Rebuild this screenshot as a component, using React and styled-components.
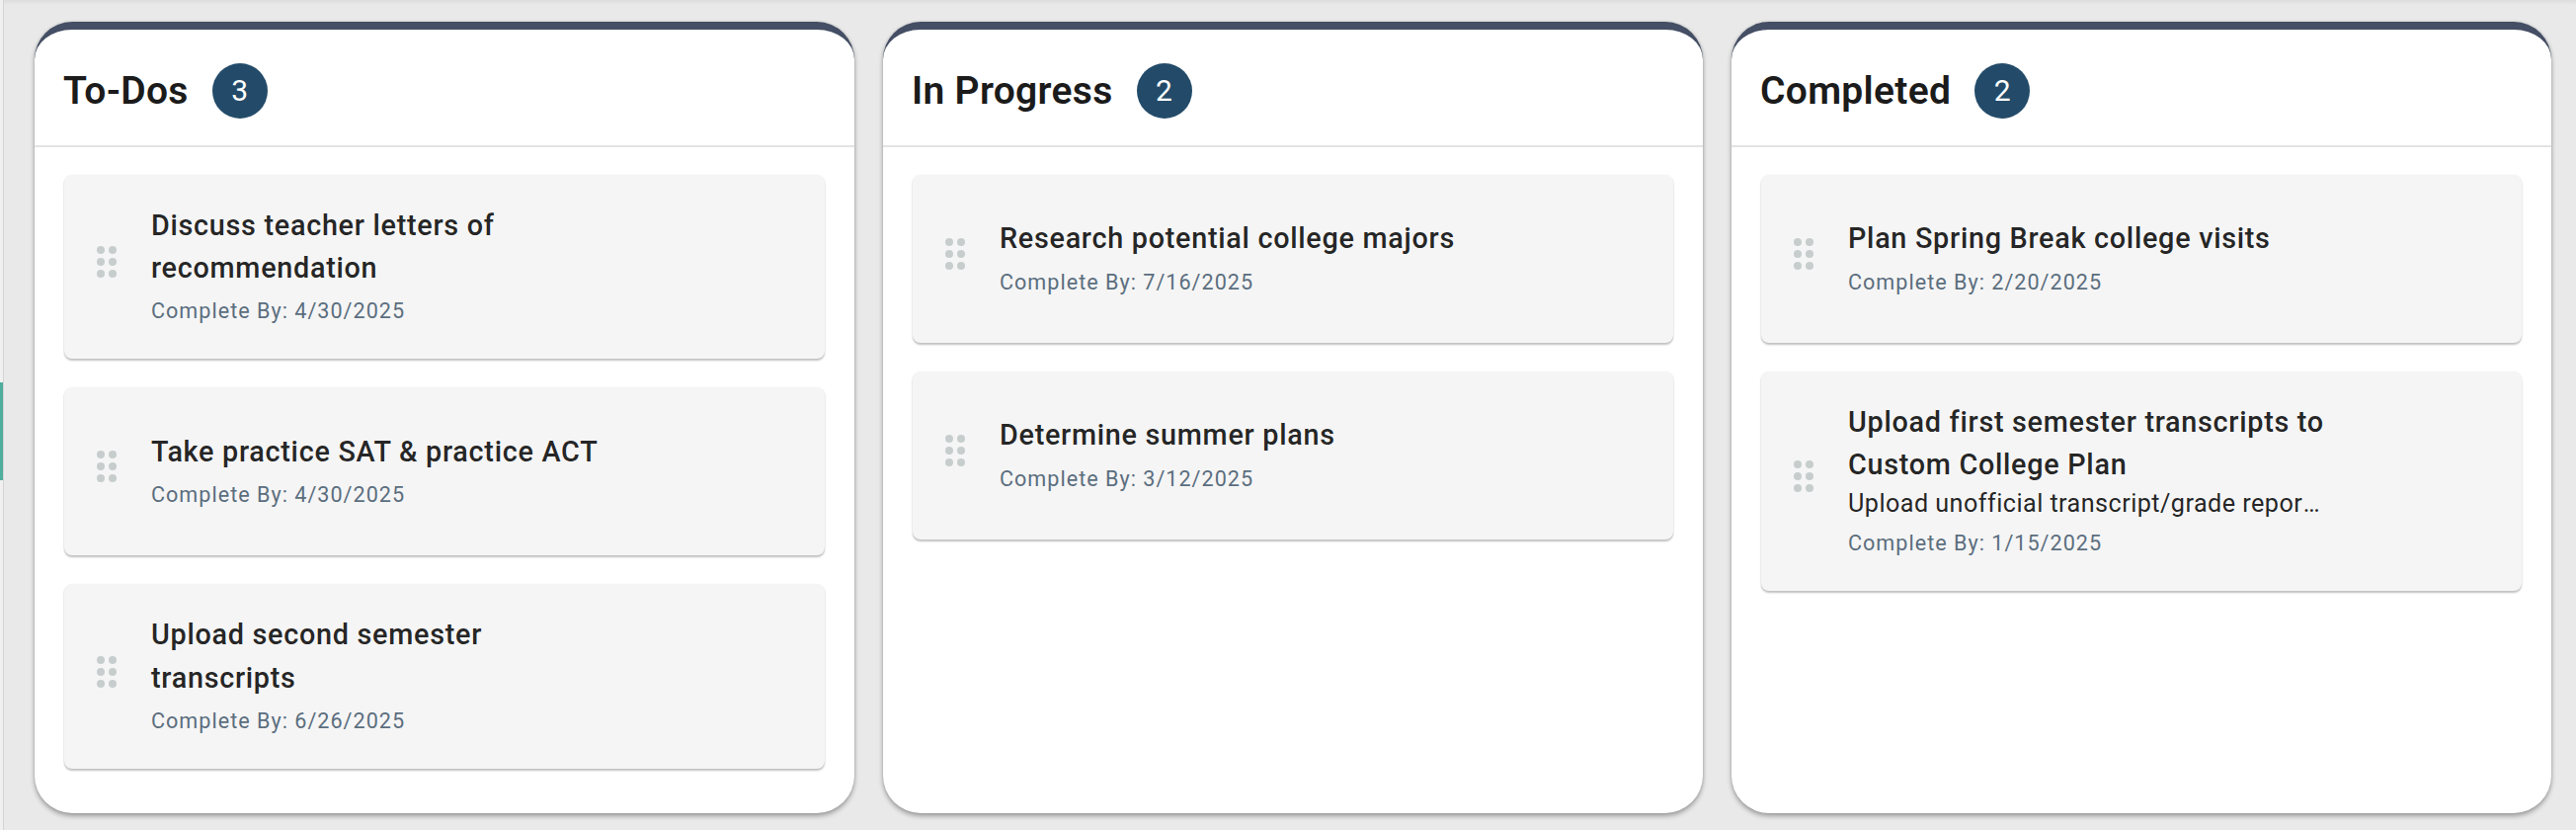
import React from "react";
import styled, { createGlobalStyle } from "styled-components";

const GlobalStyle = createGlobalStyle`
  html, body {
    margin: 0;
    padding: 0;
    background: #e9e9e9;
    font-family: Roboto, "Noto Sans", "Liberation Sans", sans-serif;
  }
  * { box-sizing: border-box; }
`;

const Page = styled.div`
  display: flex;
  min-height: 100vh;
  background: #e9e9e9;
  box-shadow: inset 0 5px 4px -3px rgba(0, 0, 0, 0.06);
`;

const Rail = styled.div`
  width: 4px;
  flex-shrink: 0;
  padding-top: 387px;
  border-right: 1px solid #d4d4d4;
  background: #f0f0f0;
`;

const RailMark = styled.div`
  width: 3px;
  height: 99px;
  background: #4fae9e;
`;

const Board = styled.div`
  flex: 1;
  display: flex;
  align-items: stretch;
  gap: 29px;
  padding: 22px 25px 17px 31px;
`;

const Column = styled.section`
  flex: 1;
  min-width: 0;
  display: flex;
  flex-direction: column;
  background: #fff;
  border-top: 8px solid #444e64;
  border-radius: 38px;
  box-shadow: 0 3px 5px rgba(0, 0, 0, 0.32), 0 0 3px rgba(0, 0, 0, 0.12);
  overflow: hidden;
`;

const Header = styled.header`
  height: 119px;
  display: flex;
  align-items: center;
  gap: 24px;
  padding: 6px 29px 0;
  border-bottom: 2px solid #e3e3e3;
`;

const Title = styled.h2`
  margin: 0;
  font-size: 39px;
  font-weight: 600;
  color: #1b1b1b;
  letter-spacing: 0.3px;
`;

const Count = styled.span`
  width: 56px;
  height: 56px;
  border-radius: 50%;
  background: #234b69;
  color: #fff;
  display: flex;
  align-items: center;
  justify-content: center;
  font-size: 30px;
  font-weight: 400;
`;

const List = styled.div`
  display: flex;
  flex-direction: column;
  gap: 29px;
  padding: 28px 30px 45px;
`;

const Card = styled.article`
  min-height: 170px;
  display: flex;
  align-items: center;
  gap: 21px;
  padding: 30px 30px 30px 19px;
  background: #f5f5f5;
  border-radius: 8px;
  box-shadow: 0 2px 2px rgba(0, 0, 0, 0.24), 0 0 2px rgba(0, 0, 0, 0.05);
`;

const Handle = styled.svg`
  width: 48px;
  height: 48px;
  flex-shrink: 0;
  margin-bottom: 10px;
  fill: #c7cdcd;
`;

const Body = styled.div`
  min-width: 0;
  max-width: 484px;
  display: flex;
  flex-direction: column;
`;

const TaskName = styled.div`
  font-size: 28.8px;
  font-weight: 500;
  line-height: 43.2px;
  letter-spacing: 0.71px;
  color: rgba(0, 0, 0, 0.87);
`;

const Note = styled.div`
  font-size: 25.2px;
  line-height: 36px;
  letter-spacing: 0.45px;
  color: rgba(0, 0, 0, 0.87);
  white-space: nowrap;
  overflow: hidden;
  text-overflow: ellipsis;
`;

const Due = styled.div`
  margin-top: 4px;
  font-size: 21.6px;
  line-height: 36px;
  letter-spacing: 1px;
  color: #5b6e7e;
`;

const columns = [
  {
    title: "To-Dos",
    tasks: [
      { name: "Discuss teacher letters of recommendation", due: "4/30/2025" },
      { name: "Take practice SAT & practice ACT", due: "4/30/2025" },
      { name: "Upload second semester transcripts", due: "6/26/2025" },
    ],
  },
  {
    title: "In Progress",
    tasks: [
      { name: "Research potential college majors", due: "7/16/2025" },
      { name: "Determine summer plans", due: "3/12/2025" },
    ],
  },
  {
    title: "Completed",
    tasks: [
      { name: "Plan Spring Break college visits", due: "2/20/2025" },
      {
        name: "Upload first semester transcripts to Custom College Plan",
        note: "Upload unofficial transcript/grade report from your school portal",
        due: "1/15/2025",
      },
    ],
  },
];

function DragHandle() {
  return (
    <Handle viewBox="0 0 24 24">
      <circle cx="9" cy="6" r="2" />
      <circle cx="15" cy="6" r="2" />
      <circle cx="9" cy="12" r="2" />
      <circle cx="15" cy="12" r="2" />
      <circle cx="9" cy="18" r="2" />
      <circle cx="15" cy="18" r="2" />
    </Handle>
  );
}

function TaskCard({ task }) {
  return (
    <Card>
      <DragHandle />
      <Body>
        <TaskName>{task.name}</TaskName>
        {task.note && <Note>{task.note}</Note>}
        <Due>Complete By: {task.due}</Due>
      </Body>
    </Card>
  );
}

export default function App() {
  return (
    <>
      <GlobalStyle />
      <Page>
        <Rail>
          <RailMark />
        </Rail>
        <Board>
          {columns.map((col) => (
            <Column key={col.title}>
              <Header>
                <Title>{col.title}</Title>
                <Count>{col.tasks.length}</Count>
              </Header>
              <List>
                {col.tasks.map((t) => (
                  <TaskCard key={t.name} task={t} />
                ))}
              </List>
            </Column>
          ))}
        </Board>
      </Page>
    </>
  );
}
